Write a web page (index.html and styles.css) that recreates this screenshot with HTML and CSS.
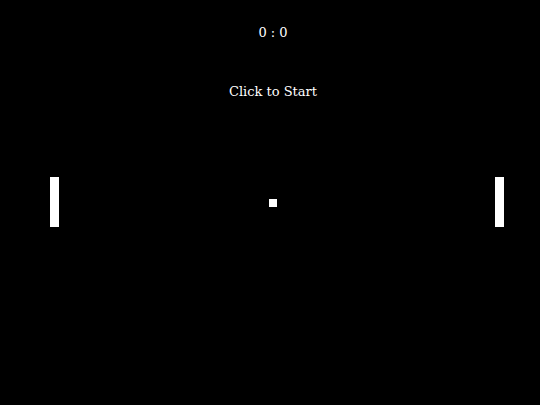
FILE: index.html
```html
<!DOCTYPE html>
<html>
<head>
<meta charset="utf-8">
<link rel="stylesheet" href="styles.css">
</head>
<body>
<div class="game">
  <div class="score">0 : 0</div>
  <div class="message">Click to Start</div>
  <div class="field">
    <div class="paddle"></div>
    <div class="ball"></div>
    <div class="paddle paddle-right"></div>
  </div>
</div>
</body>
</html>
```
FILE: styles.css
```css
html, body {
  margin: 0;
  padding: 0;
  background: #000;
}
.game {
  width: 540px;
  height: 405px;
  background: #000;
  color: #fff;
  font-family: "DejaVu Serif", serif;
  font-size: 13px;
  display: flex;
  flex-direction: column;
  overflow: hidden;
}
.score {
  line-height: 16px;
  padding-top: 25px;
  padding-left: 6px;
  text-align: center;
}
.message {
  line-height: 16px;
  margin-top: 43px;
  padding-left: 6px;
  text-align: center;
}
.field {
  margin-top: 77px;
  height: 50px;
  display: flex;
  align-items: center;
  padding-left: 50px;
  padding-right: 36px;
}
.paddle {
  width: 9px;
  height: 50px;
  background: #fff;
}
.ball {
  width: 8px;
  height: 8px;
  background: #fff;
  margin-left: 210px;
  margin-top: 2px;
}
.paddle-right {
  margin-left: auto;
}
```
